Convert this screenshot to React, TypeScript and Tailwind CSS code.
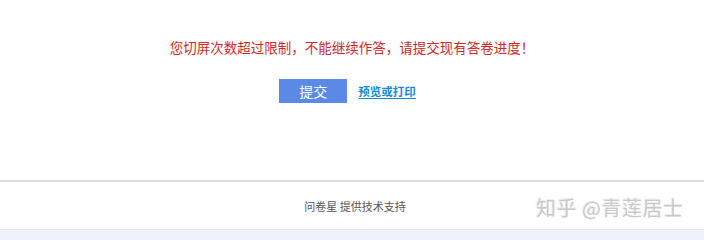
export default function App() {
  return (
    <div className="w-[704px] h-[240px] bg-white overflow-hidden flex flex-col" style={{ fontFamily: '"Noto Sans CJK SC", "Noto Sans", sans-serif' }}>
      <div className="h-[180px] flex flex-col items-center">
        <div className="mt-[37px] text-[13.5px] leading-[20px] text-[#cc2a2a]">
          您切屏次数超过限制，不能继续作答，请提交现有答卷进度！
        </div>
        <div className="mt-[22px] flex items-center gap-[11px] mr-[9px]">
          <button className="w-[68px] h-[24px] bg-[#5b8ae6] text-white text-[14px] leading-[24px] flex items-center justify-center">
            提交
          </button>
          <a className="text-[11.5px] font-bold text-[#1a8ad4] underline underline-offset-2 leading-[16px]">预览或打印</a>
        </div>
      </div>
      <div className="h-[2px] bg-[#dcdcdc]" />
      <div className="relative h-[47px] flex items-center justify-center">
        <span className="text-[11px] text-[#555] ml-[6px] mt-[2px]">问卷星 提供技术支持</span>
        <span className="absolute left-[536px] top-[13px] text-[20px] leading-[26px] text-[#c9c9c9] tracking-[0.5px]" style={{ textShadow: '1px 1px 0 #fff, -1px -1px 0 #eee' }}>
          知乎 @青莲居士
        </span>
      </div>
      <div className="flex-1 bg-[#eef3fb] border-t border-[#e3e9f3]" />
    </div>
  );
}
